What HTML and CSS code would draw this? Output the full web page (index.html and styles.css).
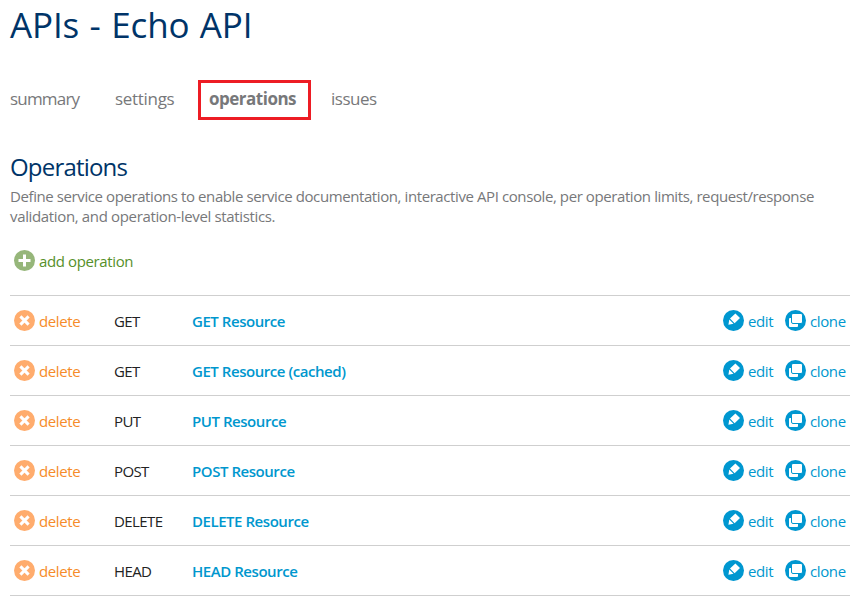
FILE: index.html
```
<!DOCTYPE html>
<html lang="en">
<head>
<meta charset="utf-8">
<title>APIs - Echo API</title>
<link rel="stylesheet" href="styles.css">
</head>
<body>
<svg class="sprite" aria-hidden="true">
  <symbol id="i-add" viewBox="0 0 21 21"><circle cx="10.5" cy="10.5" r="10.5" fill="#96b67a"/><path d="M10.5 4.5v12M4.5 10.5h12" stroke="#fff" stroke-width="3"/></symbol>
  <symbol id="i-delete" viewBox="0 0 21 21"><circle cx="10.5" cy="10.5" r="10.5" fill="#ffac6d"/><path d="M6.4 6.4l8.2 8.2M14.6 6.4l-8.2 8.2" stroke="#fff" stroke-width="3"/></symbol>
  <symbol id="i-edit" viewBox="0 0 21 21"><circle cx="10.5" cy="10.5" r="10.5" fill="#0097d0"/><path d="M12.4 3.4L17 8 11.6 13.2 7 8.6zM6.3 9.6L10.5 13.8 5.4 14.8z" fill="#fff"/></symbol>
  <symbol id="i-clone" viewBox="0 0 21 21"><circle cx="10.5" cy="10.5" r="10.5" fill="#0097d0"/><rect x="4" y="8" width="9" height="9" rx="1" fill="#fff"/><rect x="6.5" y="3.5" width="11" height="10" rx="1.5" fill="#fff" stroke="#0097d0"/></symbol>
</svg>
<main class="page">
  <h1 class="title">APIs - Echo API</h1>
  <nav class="tabs">
    <a class="tab tab-summary">summary</a>
    <a class="tab tab-settings">settings</a>
    <a class="tab tab-active"><span>operations</span></a>
    <a class="tab tab-issues">issues</a>
  </nav>
  <h2 class="heading">Operations</h2>
  <p class="intro"><span class="line1">Define service operations to enable service documentation, interactive API console, per operation limits, request/response</span><br><span class="line2">validation, and operation-level statistics.</span></p>
  <a class="action add"><svg class="icon"><use href="#i-add"/></svg><span>add operation</span></a>
  <ul class="list">
    <li class="row"><a class="action delete"><svg class="icon"><use href="#i-delete"/></svg><span>delete</span></a><span class="method">GET</span><a class="name">GET Resource</a><a class="action edit"><svg class="icon"><use href="#i-edit"/></svg><span>edit</span></a><a class="action clone"><svg class="icon"><use href="#i-clone"/></svg><span>clone</span></a></li>
    <li class="row"><a class="action delete"><svg class="icon"><use href="#i-delete"/></svg><span>delete</span></a><span class="method">GET</span><a class="name">GET Resource (cached)</a><a class="action edit"><svg class="icon"><use href="#i-edit"/></svg><span>edit</span></a><a class="action clone"><svg class="icon"><use href="#i-clone"/></svg><span>clone</span></a></li>
    <li class="row"><a class="action delete"><svg class="icon"><use href="#i-delete"/></svg><span>delete</span></a><span class="method">PUT</span><a class="name">PUT Resource</a><a class="action edit"><svg class="icon"><use href="#i-edit"/></svg><span>edit</span></a><a class="action clone"><svg class="icon"><use href="#i-clone"/></svg><span>clone</span></a></li>
    <li class="row"><a class="action delete"><svg class="icon"><use href="#i-delete"/></svg><span>delete</span></a><span class="method">POST</span><a class="name">POST Resource</a><a class="action edit"><svg class="icon"><use href="#i-edit"/></svg><span>edit</span></a><a class="action clone"><svg class="icon"><use href="#i-clone"/></svg><span>clone</span></a></li>
    <li class="row"><a class="action delete"><svg class="icon"><use href="#i-delete"/></svg><span>delete</span></a><span class="method">DELETE</span><a class="name">DELETE Resource</a><a class="action edit"><svg class="icon"><use href="#i-edit"/></svg><span>edit</span></a><a class="action clone"><svg class="icon"><use href="#i-clone"/></svg><span>clone</span></a></li>
    <li class="row"><a class="action delete"><svg class="icon"><use href="#i-delete"/></svg><span>delete</span></a><span class="method">HEAD</span><a class="name">HEAD Resource</a><a class="action edit"><svg class="icon"><use href="#i-edit"/></svg><span>edit</span></a><a class="action clone"><svg class="icon"><use href="#i-clone"/></svg><span>clone</span></a></li>
  </ul>
</main>
</body>
</html>
```
FILE: styles.css
```
* { box-sizing: border-box; }
body {
  margin: 0;
  background: #fff;
  color: #222;
  font: 15px/20px "Open Sans", "Noto Sans", sans-serif;
  letter-spacing: -0.38px;
  white-space: nowrap;
}
.sprite { display: none; }
.page { width: 850px; padding: 0 0 0 10px; }
.title {
  margin: 0;
  height: 80px;
  padding-top: 1px;
  color: #003468;
  font-size: 35px;
  font-weight: 400;
  line-height: 48px;
  letter-spacing: -0.13px;
  word-spacing: 1.5px;
}
.tabs { display: flex; height: 40px; color: #77787a; font-size: 17px; line-height: 38px; letter-spacing: -0.4px; }
.tab-summary { width: 105px; letter-spacing: -0.8px; }
.tab-settings { width: 83px; letter-spacing: -0.3px; }
.tab-issues { letter-spacing: -0.5px; }
.tab-active {
  width: 113px;
  margin-right: 20px;
  padding-left: 8px;
  border: 3px solid #ed1c24;
  line-height: 32px;
  font-weight: 700;
  letter-spacing: -0.5px;
}
.heading {
  margin: 0;
  height: 66px;
  padding-top: 31px;
  color: #003468;
  font-size: 24px;
  font-weight: 400;
  line-height: 32px;
  letter-spacing: -0.8px;
}
.intro { margin: 0; height: 64px; color: #77787a; }
.line1 { letter-spacing: -0.407px; }
.line2 { letter-spacing: -0.35px; }
.action { display: flex; align-items: flex-start; padding-left: 4px; gap: 4px; }
.action span { padding-top: 1px; }
.icon { width: 21px; height: 21px; flex: none; }
.add { height: 45px; color: #56902a; }
.list { margin: 0; padding: 0; list-style: none; border-top: 1px solid #cfcfcf; }
.row {
  display: grid;
  grid-template-columns: 104px 78px 1fr 62px 65px;
  height: 50px;
  padding-top: 14px;
  border-bottom: 1px solid #cfcfcf;
}
.delete { color: #f68b29; }
.method, .name { padding-top: 1px; }
.method { letter-spacing: -0.6px; }
.name { color: #0097ce; font-weight: 600; letter-spacing: -0.45px; }
.edit, .clone { padding-left: 0; color: #0097ce; }
```
